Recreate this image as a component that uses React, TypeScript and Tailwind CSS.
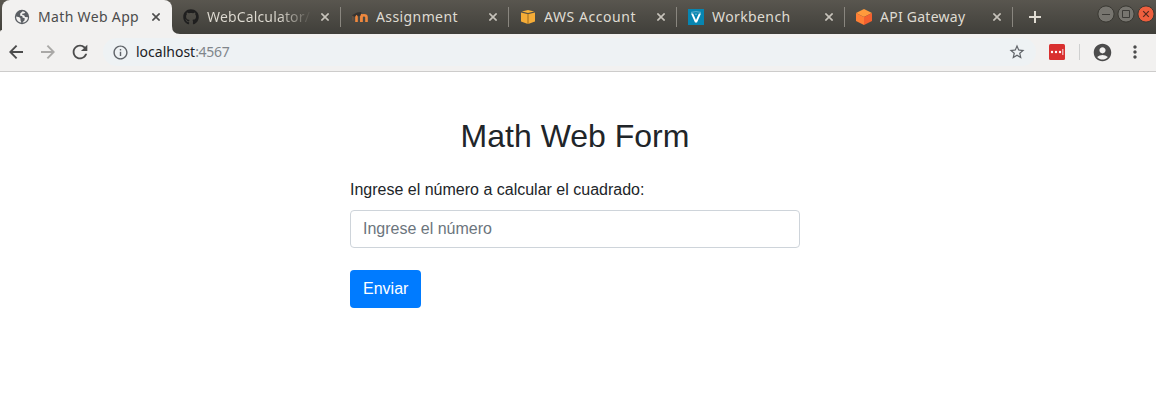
import type { ReactNode } from "react";
import {
  MdAccountCircle,
  MdArrowBack,
  MdArrowForward,
  MdInfoOutline,
  MdMoreVert,
  MdRefresh,
  MdStarBorder,
} from "react-icons/md";
import { FaGithub } from "react-icons/fa";

function Cross({ className }: { className: string }) {
  return (
    <svg viewBox="0 0 8 8" className={`size-2 shrink-0 ${className}`} stroke="currentColor" strokeWidth="1.6">
      <path d="M.4.4l7.2 7.2M7.6.4L.4 7.6" />
    </svg>
  );
}

function GlobeIcon() {
  return (
    <svg viewBox="0 0 16 16" className="size-4 shrink-0">
      <circle cx="8" cy="8" r="7.2" fill="#5a5e63" />
      <path d="M8.7 2.2L6.2 4.6v2.2l2 .3.5 1.6 1.9.4v2.1l-2.3 2.3c3.2 0 5.6-2.3 5.7-5.3l-3-.3-.8-1.7-2-.3.3-1.4h1.7l1.1-1.2z" fill="#f2f1f0" />
      <path d="M2.2 7.4l3.2.9 1.2 1.5-.2 1.3 1 2.4C4.3 13.3 1.9 10.7 2.2 7.4z" fill="#f2f1f0" />
    </svg>
  );
}

function MoodleIcon() {
  return (
    <svg viewBox="0 0 16 16" className="size-4 shrink-0">
      <path d="M4.5 13V6M9.4 13V8.2c0-2.6 5.1-2.6 5.1 0V13" fill="none" stroke="#f0883e" strokeWidth="2.6" />
      <path d="M9.4 5v8" stroke="#f0883e" strokeWidth="2.2" />
      <path d="M0 6.2L5 3.4 9.4 3 8.6 6.4 6 7.4 4.6 5.8 3 7.8 1 7.6z" fill="#353331" />
      <path d="M.9 6.8v4.8" stroke="#76553f" strokeWidth="1" />
    </svg>
  );
}

function AwsIcon() {
  return (
    <svg viewBox="0 0 16 16" className="size-4 shrink-0">
      <path d="M1 3.4l6.2 1.5v9.9L1 12.6zM15 3.4L8.8 4.9v9.9l6.2-2.2z" fill="#f5ac37" />
      <path d="M1.8 2.5L8 1l6.2 1.5L8 4.1z" fill="#f9b23b" />
      <path d="M7.2 4.9h1.6v9.9H7.2z" fill="#c88721" />
      <path d="M8 4.8v10" stroke="#f5ac37" strokeWidth=".6" />
    </svg>
  );
}

function WorkbenchIcon() {
  return (
    <svg viewBox="0 0 16 16" className="size-4 shrink-0">
      <path d="M0 0h16v16H0z" fill="#0785b1" />
      <path d="M3 4.6h2.1L8 11l2.9-6.4H13L9 13.4H7z" fill="#fff" />
      <path d="M3 3.4q5-1.6 10 0" stroke="#78bdd4" strokeWidth=".8" fill="none" />
      <path d="M6.5 4.8h3L8 6z" fill="#8ecadb" />
    </svg>
  );
}

function GatewayIcon() {
  return (
    <svg viewBox="0 0 16 16" className="size-4 shrink-0">
      <path d="M8 0l8 4-8 4-8-4z" fill="#ff9a3c" />
      <path d="M0 4l8 4v8l-8-4z" fill="#ff7f35" />
      <path d="M16 4L8 8v8l8-4z" fill="#f4602f" />
    </svg>
  );
}

type TabInfo = { title: string; icon: ReactNode; text: string; pad: string };

const tabs: TabInfo[] = [
  {
    title: "WebCalculator/",
    icon: <FaGithub className="size-4 shrink-0 text-[#1f1f1f]" />,
    text: "w-[105px] tracking-[0.15px] bg-linear-to-r from-[#dfdbd2] from-68% to-transparent bg-clip-text text-transparent",
    pad: "pl-[11px]",
  },
  { title: "Assignment", icon: <MoodleIcon />, text: "w-[104px] tracking-[0.4px] text-[#dfdbd2]", pad: "pl-3" },
  { title: "AWS Account", icon: <AwsIcon />, text: "w-[104px] tracking-[0.55px] text-[#dfdbd2]", pad: "pl-3" },
  { title: "Workbench", icon: <WorkbenchIcon />, text: "w-[104px] tracking-[0.4px] text-[#dfdbd2]", pad: "pl-3" },
  { title: "API Gateway", icon: <GatewayIcon />, text: "w-[104px] tracking-[0.25px] text-[#dfdbd2]", pad: "pl-3" },
];

function TabStrip() {
  return (
    <div className="flex h-[34px] bg-linear-to-b from-[#59564f] to-[#403f3a]">
      <div className="flex w-0.5 shrink-0 items-end">
        <span className="h-1 w-0.5 rounded-tl bg-[#f2f1f0]" />
      </div>
      <div className="relative flex w-[170px] shrink-0 items-center rounded-t-lg bg-[#f2f1f0] pl-3">
        <GlobeIcon />
        <span className="ml-2 w-[112px] text-sm tracking-[0.34px] whitespace-nowrap text-[#4c4c4c]">Math Web App</span>
        <Cross className="ml-0.5 text-[#4d4d4d]" />
        <svg viewBox="0 0 8 8" className="absolute bottom-0 left-full size-2">
          <path d="M0 0v8h8Q0 8 0 0z" fill="#f2f1f0" />
        </svg>
      </div>
      {tabs.map((tab) => (
        <div key={tab.title} className={`relative flex w-[168px] shrink-0 items-center ${tab.pad}`}>
          {tab.icon}
          <span className={`ml-2 overflow-hidden text-sm whitespace-nowrap ${tab.text}`}>{tab.title}</span>
          <Cross className="ml-[9px] text-[#c7c3bb]" />
          <span className="absolute top-[7px] -right-px h-5 w-px bg-[#89867f]" />
        </div>
      ))}
      <svg viewBox="0 0 12 12" className="mt-[11px] ml-[17px] size-3 shrink-0" stroke="#dfdbd2" strokeWidth="2">
        <path d="M6 0v12M0 6h12" />
      </svg>
      <WindowControls />
    </div>
  );
}

function WindowControls() {
  return (
    <div className="mt-[5px] ml-auto flex gap-0.5 pr-px">
      <svg viewBox="0 0 18 18" className="size-[18px]">
        <circle cx="9" cy="9" r="8.1" fill="#77756f" stroke="#393832" />
        <path d="M5 9.5h8" stroke="#3c3b37" />
      </svg>
      <svg viewBox="0 0 18 18" className="size-[18px]">
        <circle cx="9" cy="9" r="8.1" fill="#77756f" stroke="#393832" />
        <path d="M5.5 5.5h7v7h-7z" fill="none" stroke="#3c3b37" />
      </svg>
      <svg viewBox="0 0 18 18" className="size-[18px]">
        <circle cx="9" cy="9" r="8.1" fill="#ee5f3e" stroke="#393832" />
        <path d="M6.2 6.2l5.6 5.6M11.8 6.2l-5.6 5.6" stroke="#53291e" strokeWidth="1.2" />
      </svg>
    </div>
  );
}

function Toolbar() {
  return (
    <div className="flex h-[38px] items-center border-b border-[#cdcccb] bg-[#f2f1f0] pb-px">
      <svg viewBox="0 0 14 14" className="ml-[9px] size-3.5 text-[#4c4c4c]" fill="none" stroke="currentColor" strokeWidth="1.9">
        <path d="M14 7H1.6M7.6.7L1.3 7l6.3 6.3" />
      </svg>
      <svg viewBox="0 0 14 14" className="ml-[18px] size-3.5 text-[#aaa9a7]" fill="none" stroke="currentColor" strokeWidth="1.9">
        <path d="M0 7h12.4M6.4.7L12.7 7l-6.3 6.3" />
      </svg>
      <MdRefresh className="ml-[14px] size-[22px] text-[#4c4c4c]" />
      <div className="ml-[12px] flex h-7 w-[933px] items-center rounded-full bg-[#eef2f4] pl-[9px]">
        <MdInfoOutline className="size-[17px] text-[#5f6368]" />
        <span className="ml-[7px] flex text-sm whitespace-nowrap">
          <span className="text-[#202124]">localhost</span>
          <span className="tracking-[-0.3px] text-[#80868b]">:4567</span>
        </span>
        <MdStarBorder className="mr-[10px] ml-auto size-[18px] text-[#5f6368]" />
      </div>
      <svg viewBox="0 0 16 16" className="ml-[13px] size-4">
        <rect width="16" height="16" rx="1.5" fill="#d9302f" />
        <g fill="#fff">
          <circle cx="3" cy="8" r="1.2" />
          <circle cx="7" cy="8" r="1.2" />
          <circle cx="11" cy="8" r="1.2" />
          <path d="M13.4 5h.9v6h-.9z" />
        </g>
      </svg>
      <span className="ml-[14px] h-4 w-px bg-[#cfd0d0]" />
      <MdAccountCircle className="ml-[12px] size-[21px] text-[#4c4c4c]" />
      <MdMoreVert className="ml-[12px] size-5 text-[#4c4c4c]" />
    </div>
  );
}

export default function App() {
  return (
    <div className="h-[420px] w-[1156px] overflow-hidden bg-white">
      <header className="font-['Noto_Sans',sans-serif]">
        <TabStrip />
        <Toolbar />
      </header>
      <main className="ml-[350px] w-[450px] pt-[45px] font-['Liberation_Sans',Arial,sans-serif] text-base text-[#212529]">
        <h1 className="text-center text-[32px] leading-[38px]">Math Web Form</h1>
        <form className="mt-[23px]" onSubmit={(event) => event.preventDefault()}>
          <label htmlFor="number" className="mb-2 block leading-6">
            Ingrese el número a calcular el cuadrado:
          </label>
          <input
            id="number"
            type="text"
            placeholder="Ingrese el número"
            className="block h-[38px] w-full rounded border border-[#ced4da] px-3 placeholder:text-[#6c757d]"
          />
          <button type="submit" className="mt-[22px] block h-[38px] rounded bg-[#007bff] px-[13px] text-white">
            Enviar
          </button>
        </form>
      </main>
    </div>
  );
}
